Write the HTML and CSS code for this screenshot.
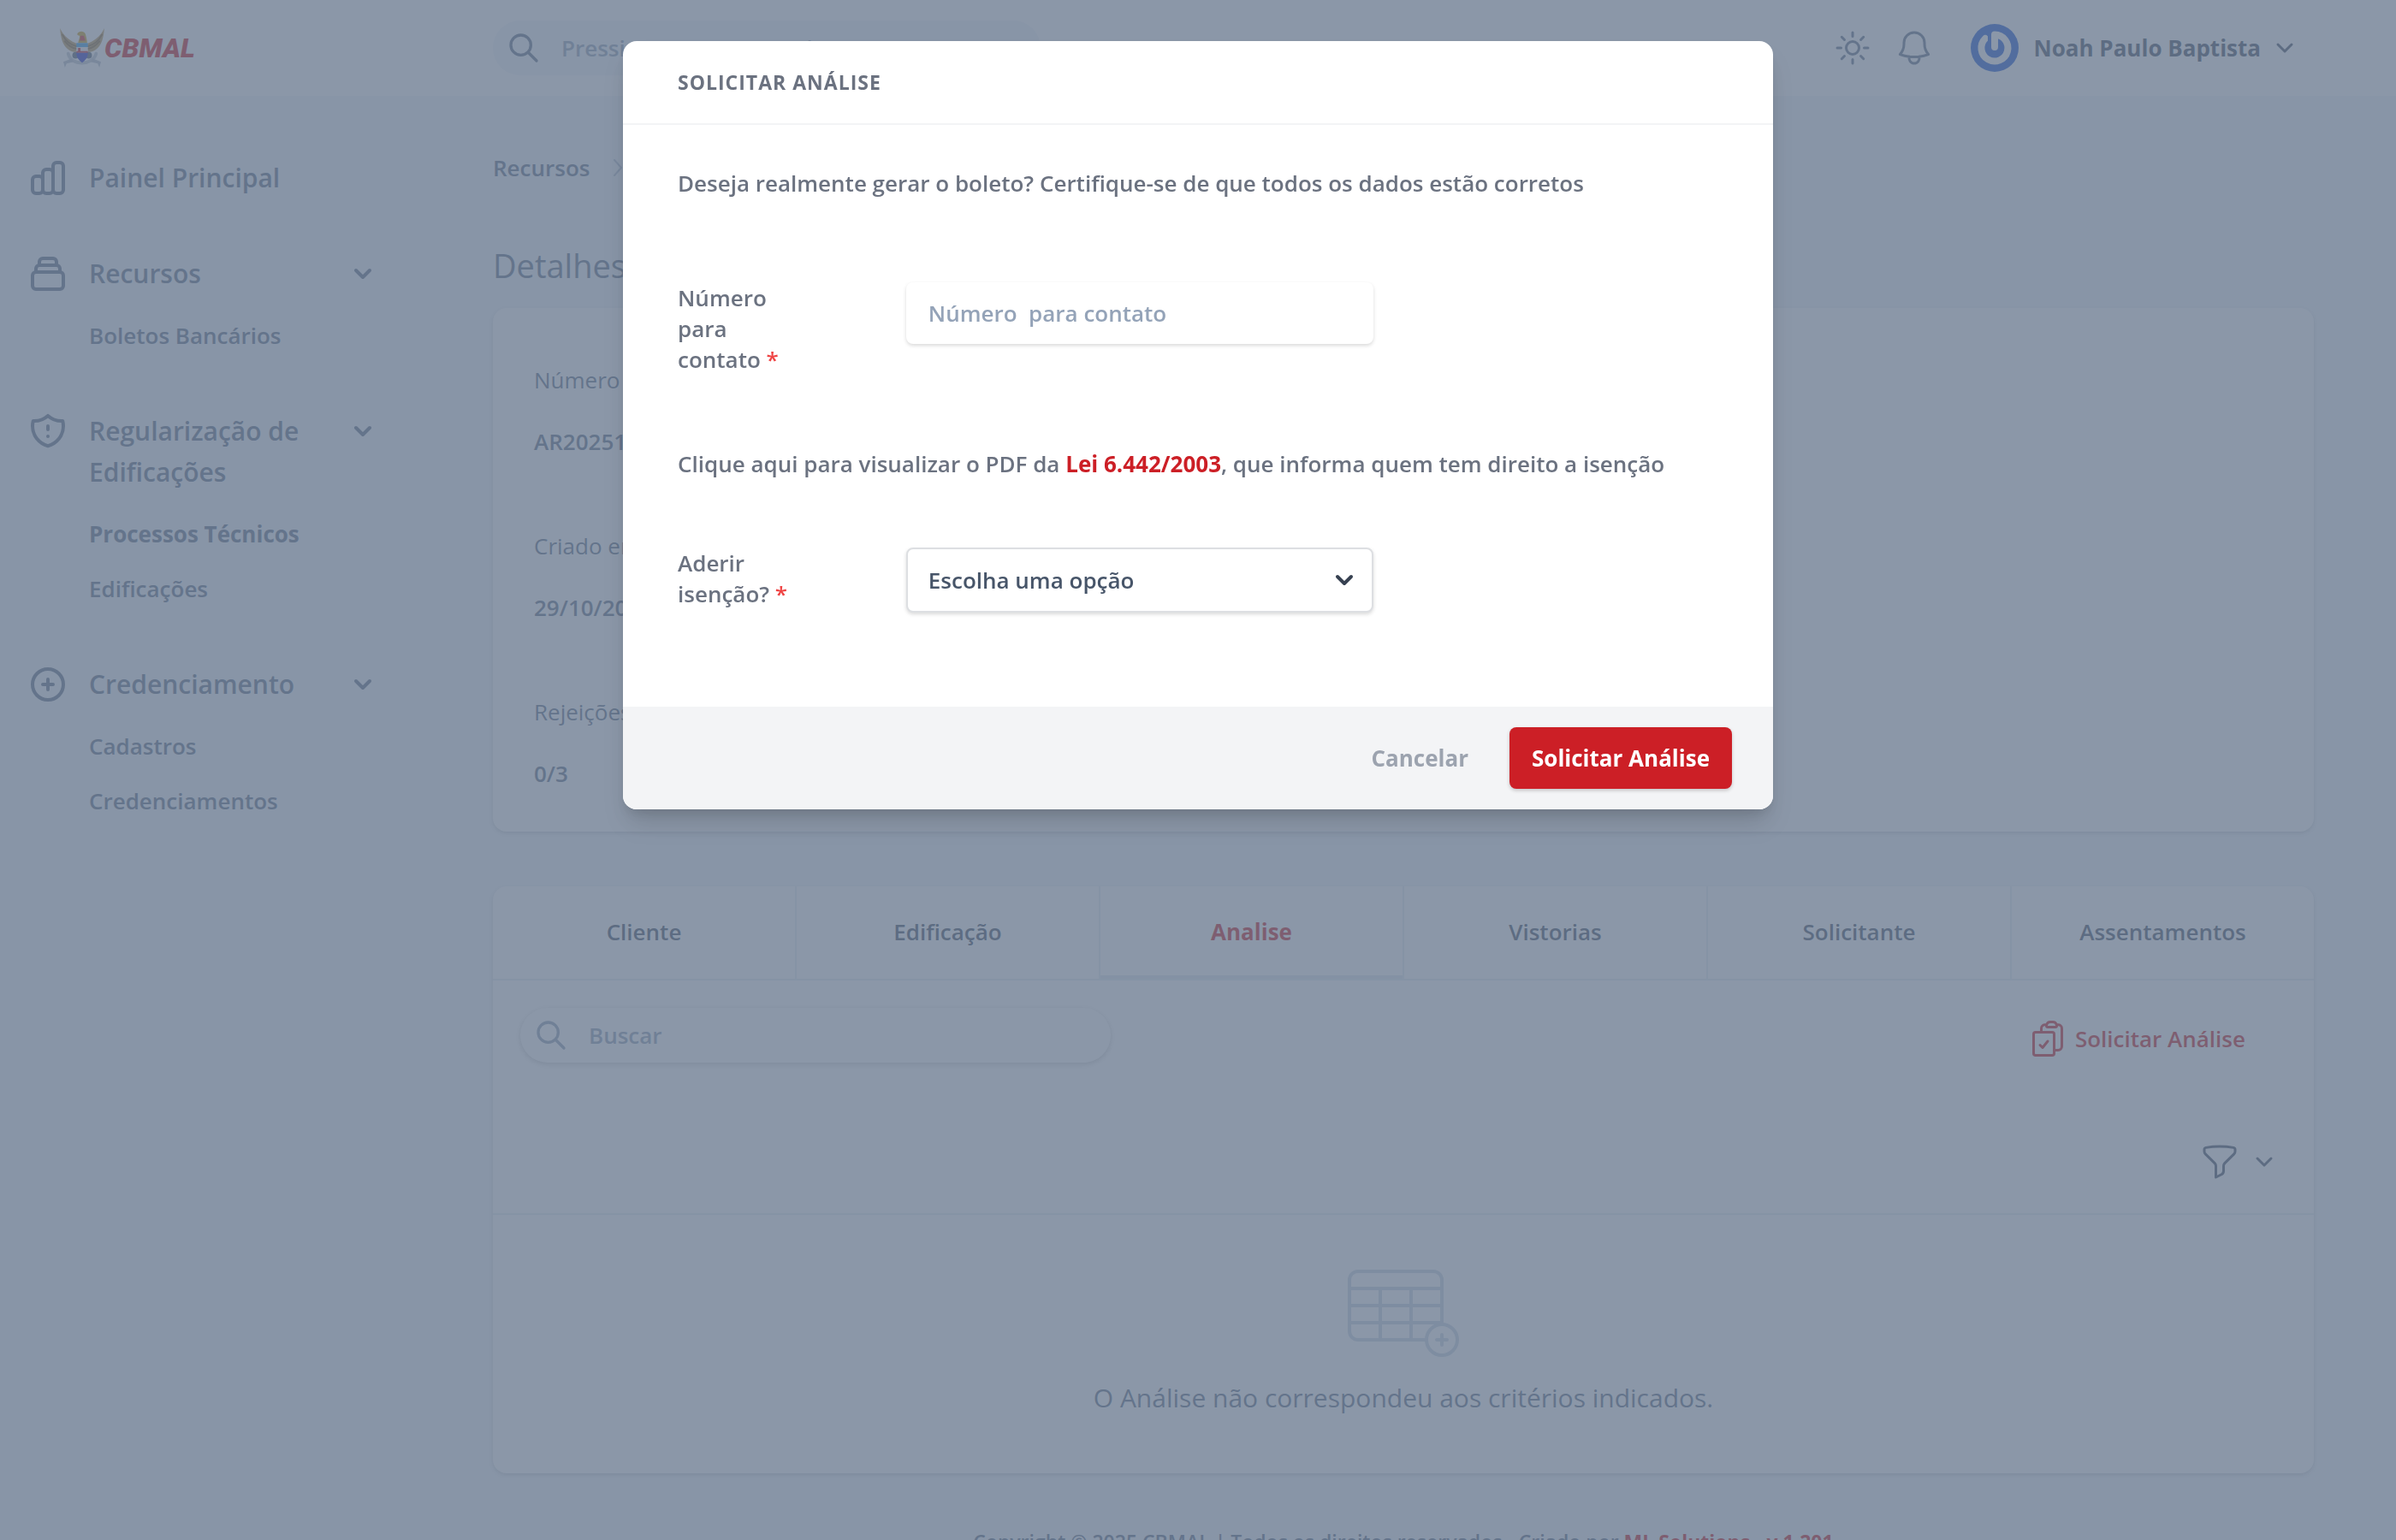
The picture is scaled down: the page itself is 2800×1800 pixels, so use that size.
FILE: index.html
```html
<!DOCTYPE html>
<html lang="pt-BR">
<head>
  <meta charset="UTF-8">
  <meta name="viewport" content="width=device-width, initial-scale=1.0">
  <title>CBMAL</title>
  <link rel="stylesheet" href="styles.css">
</head>

<body>
  <header class="topbar">
    <a class="brand" href="#">
      <svg class="brand-icon" viewBox="0 0 54 48" aria-hidden="true">
        <path fill="#bd9a5c" d="M0 0c1 12 3 20 9 25 3 3 7 4 11 4l1-10C14 16 5 11 0 0zM54 0c-1 12-3 20-9 25-3 3-7 4-11 4l-1-10C40 16 49 11 54 0z"/>
        <path stroke="#8a6b38" fill="none" d="M3 8c4 8 9 12 17 14M6 16c4 5 8 8 14 9M51 8c-4 8-9 12-17 14M48 16c-4 5-8 8-14 9"/>
        <path fill="#c9a227" d="M21 7c2-4 8-4 10 0 1 4 2 7 2 11H22c1-4 2-6 2-9-2 0-3-1-3-2z"/>
        <path fill="#d8302f" d="M25 9h4l2 6h-7z"/>
        <path fill="none" stroke="#c3c9d2" stroke-width="4" d="M10 31c3 15 30 15 34 0"/>
        <path fill="#b9c0cb" d="M4 41l10-4 3 4-9 2-2 5zM50 41l-10-4-3 4 9 2 2 5z"/>
        <circle cx="19" cy="33" r="4" fill="#56657a"/>
        <circle cx="35" cy="33" r="4" fill="#56657a"/>
        <path fill="#3aa0e8" d="M20 18h14v5H20z"/>
        <path fill="#f4f4f4" d="M20 23h14v6H20z"/>
        <path fill="#c6202a" d="M22 24h3v4h9v2H20v-2h2z"/>
        <path fill="#2836c8" d="M20 30h14c0 6-3 9-7 12-4-3-7-6-7-12z"/>
      </svg>
      <span>CBMAL</span>
    </a>
    <div class="topbar-search">
      <svg class="icon-search" viewBox="0 0 24 24" aria-hidden="true"><path d="M21 21l-6-6m2-5a7 7 0 11-14 0 7 7 0 0114 0z"/></svg>
      <input type="search" aria-label="Pesquisar" placeholder="Pressione / para pesquisar">
    </div>
    <div class="topbar-actions">
      <button class="icon-button" type="button" aria-label="Tema">
        <svg class="icon icon-thin" viewBox="0 0 24 24"><path d="M12 3v2.25m6.364.386l-1.591 1.591M21 12h-2.25m-.386 6.364l-1.591-1.591M12 18.75V21m-4.773-4.227l-1.591 1.591M5.25 12H3m4.227-4.773L5.636 5.636M15.75 12a3.75 3.75 0 11-7.5 0 3.75 3.75 0 017.5 0z"/></svg>
      </button>
      <button class="icon-button" type="button" aria-label="Notificações">
        <svg class="icon icon-thin" viewBox="0 0 24 24"><path d="M14.857 17.082a23.848 23.848 0 005.454-1.31A8.967 8.967 0 0118 9.75v-.7V9A6 6 0 006 9v.75a8.967 8.967 0 01-2.312 6.022c1.733.64 3.56 1.085 5.455 1.31m5.714 0a24.255 24.255 0 01-5.714 0m5.714 0a3 3 0 11-5.714 0"/></svg>
      </button>
      <button class="user-menu" type="button">
        <svg class="avatar" viewBox="0 0 56 56" aria-hidden="true">
          <circle cx="28" cy="28" r="28" fill="#1e5ad6"/>
          <path fill="none" stroke="#fff" stroke-width="8" stroke-linecap="round" d="M17 17a15.500 15.500 0 1 0 11-4.500V27"/>
          <path fill="none" stroke="#1e5ad6" stroke-width="4" d="M22 8v14"/>
        </svg>
        <span>Noah Paulo Baptista</span>
        <svg class="chevron chevron-thin" viewBox="0 0 10 6"><path d="M1 1l4 4 4-4"/></svg>
      </button>
    </div>
  </header>

  <div class="layout">
    <nav class="sidebar">
      <section class="menu-section menu-single">
        <a class="menu-title" href="#">
          <svg class="icon" viewBox="0 0 24 24"><path d="M9 19v-6a2 2 0 00-2-2H5a2 2 0 00-2 2v6a2 2 0 002 2h2a2 2 0 002-2zm0 0V9a2 2 0 012-2h2a2 2 0 012 2v10m-6 0a2 2 0 002 2h2a2 2 0 002-2m0 0V5a2 2 0 012-2h2a2 2 0 012 2v14a2 2 0 01-2 2h-2a2 2 0 01-2-2z"/></svg>
          <span>Painel Principal</span>
        </a>
      </section>
      <section class="menu-section">
        <button class="menu-title" type="button">
          <svg class="icon" viewBox="0 0 24 24"><path d="M19 11H5m14 0a2 2 0 012 2v6a2 2 0 01-2 2H5a2 2 0 01-2-2v-6a2 2 0 012-2m14 0V9a2 2 0 00-2-2M5 11V9a2 2 0 012-2m0 0V5a2 2 0 012-2h6a2 2 0 012 2v2M7 7h10"/></svg>
          <span>Recursos</span>
          <svg class="chevron" viewBox="0 0 10 6"><path d="M1 1l4 4 4-4"/></svg>
        </button>
        <a class="menu-item" href="#">Boletos Bancários</a>
      </section>
      <section class="menu-section">
        <button class="menu-title" type="button">
          <svg class="icon" viewBox="0 0 24 24"><path d="M20.618 5.984A11.955 11.955 0 0112 2.944a11.955 11.955 0 01-8.618 3.040A12.020 12.020 0 003 9c0 5.591 3.824 10.290 9 11.622 5.176-1.332 9-6.030 9-11.622 0-1.042-.133-2.052-.382-3.016zM12 9v2m0 4h.01"/></svg>
          <span>Regularização de Edificações</span>
          <svg class="chevron" viewBox="0 0 10 6"><path d="M1 1l4 4 4-4"/></svg>
        </button>
        <a class="menu-item active" href="#">Processos Técnicos</a>
        <a class="menu-item" href="#">Edificações</a>
      </section>
      <section class="menu-section">
        <button class="menu-title" type="button">
          <svg class="icon" viewBox="0 0 24 24"><path d="M12 9v3m0 0v3m0-3h3m-3 0H9m12 0a9 9 0 11-18 0 9 9 0 0118 0z"/></svg>
          <span>Credenciamento</span>
          <svg class="chevron" viewBox="0 0 10 6"><path d="M1 1l4 4 4-4"/></svg>
        </button>
        <a class="menu-item" href="#">Cadastros</a>
        <a class="menu-item" href="#">Credenciamentos</a>
      </section>
    </nav>

    <main class="content">
      <div class="breadcrumb">
        <a href="#">Recursos</a>
        <svg viewBox="0 0 10 20" aria-hidden="true"><path d="M1 1l8 9-8 9"/></svg>
      </div>
      <h1>Detalhes</h1>

      <dl class="card details">
        <div><dt>Número</dt><dd>AR20251</dd></div>
        <div><dt>Criado em</dt><dd>29/10/2025</dd></div>
        <div><dt>Rejeições</dt><dd>0/3</dd></div>
      </dl>

      <div class="card">
        <div class="tabs" role="tablist">
          <button type="button" role="tab">Cliente</button>
          <button type="button" role="tab">Edificação</button>
          <button type="button" role="tab" class="selected" aria-selected="true">Analise</button>
          <button type="button" role="tab">Vistorias</button>
          <button type="button" role="tab">Solicitante</button>
          <button type="button" role="tab">Assentamentos</button>
        </div>
        <div class="toolbar">
          <div class="table-search">
            <svg class="icon-search" viewBox="0 0 24 24" aria-hidden="true"><path d="M21 21l-6-6m2-5a7 7 0 11-14 0 7 7 0 0114 0z"/></svg>
            <input type="search" aria-label="Buscar" placeholder="Buscar">
          </div>
          <button class="request-button" type="button">
            <svg class="icon icon-thin" viewBox="0 0 24 24"><path d="M11.350 3.836c-.065.210-.100.433-.100.664 0 .414.336.750.750.750h4.500a.750.750 0 00.750-.750 2.250 2.250 0 00-.100-.664m-5.800 0A2.251 2.251 0 0113.500 2.250H15c1.012 0 1.867.668 2.150 1.586m-5.800 0c-.376.023-.750.050-1.124.080C9.095 4.010 8.250 4.973 8.250 6.108V8.250m8.900-4.414c.376.023.750.050 1.124.080 1.131.094 1.976 1.057 1.976 2.192V16.500A2.250 2.250 0 0118 18.750h-2.250m-7.500-10.500H4.875c-.621 0-1.125.504-1.125 1.125v11.250c0 .621.504 1.125 1.125 1.125h9.750c.621 0 1.125-.504 1.125-1.125V18.750m-7.500-10.500h6.375c.621 0 1.125.504 1.125 1.125v9.375m-8.250-3l1.500 1.500 3-3.750"/></svg>
            <span>Solicitar Análise</span>
          </button>
        </div>
        <div class="filters">
          <button class="filter-button" type="button" aria-label="Filtros">
            <svg class="icon icon-thin" viewBox="0 0 24 24"><path d="M12 3c2.755 0 5.455.232 8.083.678.533.090.917.556.917 1.096v1.044a2.250 2.250 0 01-.659 1.591l-5.432 5.432a2.250 2.250 0 00-.659 1.591v2.927a2.250 2.250 0 01-1.244 2.013L9.750 21v-6.568a2.250 2.250 0 00-.659-1.591L3.659 7.409A2.250 2.250 0 013 5.818V4.774c0-.540.384-1.006.917-1.096A48.320 48.320 0 0112 3z"/></svg>
            <svg class="chevron chevron-thin" viewBox="0 0 10 6"><path d="M1 1l4 4 4-4"/></svg>
          </button>
        </div>
        <div class="empty">
          <svg viewBox="0 0 65 51" aria-hidden="true">
            <rect x="1" y="1" width="54" height="40" rx="5"/>
            <path d="M1 11h54M1 21h54M1 31h54M19 11v30M37 11v30"/>
            <circle cx="55" cy="41" r="9"/>
            <path stroke-linecap="round" d="M52 41h6M55 38v6"/>
          </svg>
          <p>O Análise não correspondeu aos critérios indicados.</p>
        </div>
      </div>

      <footer class="footer">Copyright © 2025 CBMAL | Todos os direitos reservados - Criado por <a href="#">ML Solutions - v 1.201</a></footer>
    </main>
  </div>

  <div class="overlay">
    <form class="modal" role="dialog" aria-labelledby="modal-title">
      <h2 id="modal-title">Solicitar Análise</h2>
      <div class="modal-body">
        <p class="question">Deseja realmente gerar o boleto? Certifique-se de que todos os dados estão corretos</p>
        <div class="field">
          <label for="contato">Número para contato <span>*</span></label>
          <div class="control">
            <input id="contato" type="text" placeholder="Número  para contato">
          </div>
        </div>
        <p>Clique aqui para visualizar o PDF da <a href="#">Lei 6.442/2003</a>, que informa quem tem direito a isenção</p>
        <div class="field">
          <label for="isencao">Aderir isenção? <span>*</span></label>
          <div class="control">
            <select id="isencao">
              <option>Escolha uma opção</option>
              <option>Sim</option>
              <option>Não</option>
            </select>
            <svg class="chevron" viewBox="0 0 10 6"><path d="M1 1l4 4 4-4"/></svg>
          </div>
        </div>
      </div>
      <div class="modal-footer">
        <button class="cancel" type="button">Cancelar</button>
        <button class="submit" type="submit">Solicitar Análise</button>
      </div>
    </form>
  </div>
</body>

</html>
```
FILE: styles.css
```css
* {
  box-sizing: border-box;
}

body {
  margin: 0;
  height: 100vh;
  overflow: hidden;
  font-family: 'Open Sans', 'Noto Sans', sans-serif;
  font-size: 26px;
  font-weight: 600;
  line-height: 36px;
  color: #64748b;
  background-color: #f1f5f9;
}

h1, h2, p, dl, dd {
  margin: 0;
}

a {
  color: inherit;
  text-decoration: none;
}

button, input, select {
  font: inherit;
  color: inherit;
  border: 0;
  padding: 0;
  background: none;
}

svg {
  flex: none;
  fill: none;
  stroke: currentColor;
  stroke-width: 2;
  stroke-linecap: round;
  stroke-linejoin: round;
}

.icon {
  width: 48px;
  height: 48px;
}

.icon-thin {
  stroke-width: 1.5;
}

.icon-search {
  width: 40px;
  height: 40px;
}

.chevron {
  width: 20px;
  height: 12px;
  overflow: visible;
}

.chevron-thin {
  stroke-width: 1.5;
}

/* top bar */
.topbar {
  display: flex;
  align-items: center;
  height: 112px;
  padding: 0 120px 0 70px;
  background-color: #fff;
}

.brand {
  display: flex;
  align-items: center;
  width: 506px;
  font-family: Roboto, sans-serif;
  font-size: 32px;
  font-weight: 900;
  font-style: italic;
  color: #cc1f26;
}

.brand-icon {
  width: 52px;
  height: 46px;
  stroke: none;
}

.topbar-search {
  display: flex;
  align-items: center;
  gap: 24px;
  width: 640px;
  height: 64px;
  padding: 0 16px;
  border-radius: 32px;
  background-color: #f1f5f9;
}

.topbar-search input,
.table-search input {
  flex: 1;
  min-width: 0;
}

input::placeholder {
  color: #94a3b8;
  opacity: 1;
}

.topbar-actions {
  display: flex;
  align-items: center;
  gap: 24px;
  margin-left: auto;
}

.icon-button {
  display: flex;
}

.user-menu {
  display: flex;
  align-items: center;
  gap: 18px;
  margin-left: 18px;
  font-weight: 700;
  color: #475569;
}

.avatar {
  width: 56px;
  height: 56px;
  stroke: none;
}

/* sidebar */
.layout {
  display: flex;
}

.sidebar {
  width: 480px;
  padding: 72px 46px 0 32px;
}

.menu-section {
  margin-bottom: 56px;
}

.menu-single {
  margin-bottom: 64px;
}

.menu-title {
  display: flex;
  align-items: flex-start;
  gap: 24px;
  width: 100%;
  margin-bottom: 16px;
  font-size: 30px;
  line-height: 48px;
  text-align: left;
}

.menu-title span {
  flex: 1;
}

.menu-title .chevron {
  margin-top: 18px;
}

.menu-item {
  display: block;
  padding-left: 72px;
  line-height: 64px;
}

.menu-item.active {
  font-weight: 700;
}

/* content */
.content {
  flex: 1;
  padding: 64px 96px 0;
}

.breadcrumb {
  display: flex;
  align-items: center;
  gap: 28px;
  height: 40px;
}

.breadcrumb svg {
  width: 10px;
  height: 20px;
  color: #b6c2d1;
}

h1 {
  margin: 70px 0 26px;
  font-size: 38px;
  font-weight: 400;
  line-height: 48px;
}

.card {
  border-radius: 16px;
  background-color: #fff;
  box-shadow: 0 2px 4px rgba(0, 0, 0, 0.15);
}

.details {
  display: flex;
  flex-direction: column;
  gap: 50px;
  padding: 48px 48px 32px;
  margin-bottom: 64px;
}

.details dt,
.details dd {
  line-height: 72px;
}

.details dt {
  font-weight: 400;
}

.tabs {
  display: flex;
  border-bottom: 2px solid #e8edf2;
}

.tabs button {
  flex: 1;
  height: 108px;
  padding-bottom: 2px;
  color: #475569;
}

.tabs button + button {
  border-left: 2px solid #e8edf2;
}

.tabs .selected {
  box-shadow: inset 0 -4px #e2e8f0;
  font-weight: 700;
  color: #cc1f26;
}

.toolbar {
  display: flex;
  align-items: flex-start;
  justify-content: space-between;
  padding: 32px 80px 32px 32px;
}

.table-search {
  display: flex;
  align-items: center;
  gap: 24px;
  width: 690px;
  height: 64px;
  padding: 0 16px;
  border-radius: 32px;
  box-shadow: 0 2px 6px rgba(0, 0, 0, 0.2);
  color: #94a3b8;
}

.request-button {
  display: flex;
  align-items: center;
  gap: 8px;
  height: 72px;
  color: #cc1f26;
}

.filters {
  display: flex;
  justify-content: flex-end;
  padding: 52px 48px 36px;
  border-bottom: 2px solid #e8edf2;
}

.filter-button {
  display: flex;
  align-items: center;
  gap: 18px;
  color: #475569;
}

.empty {
  padding: 64px 0;
  text-align: center;
}

.empty p {
  margin-top: 16px;
  font-size: 30px;
  font-weight: 400;
  line-height: 48px;
}

.empty svg {
  width: 130px;
  height: 102px;
  color: #cbd5e1;
  overflow: visible;
}

.empty circle {
  fill: #fff;
}

.footer {
  margin-top: 62px;
  font-size: 23px;
  text-align: center;
}

.footer a {
  font-weight: 700;
  color: #cc1f26;
}

/* modal */
.overlay {
  position: fixed;
  inset: 0;
  padding: 48px;
  background-color: rgba(100, 116, 139, 0.75);
}

.modal {
  max-width: 1344px;
  margin: 0 auto;
  border-radius: 16px;
  overflow: hidden;
  color: #6b7280;
  background-color: #fff;
  box-shadow: 0 20px 30px -6px rgba(0, 0, 0, 0.15), 0 8px 12px -4px rgba(0, 0, 0, 0.1);
}

.modal h2 {
  padding: 32px 64px;
  border-bottom: 2px solid #f3f4f6;
  font-size: 23px;
  font-weight: 700;
  line-height: 32px;
  letter-spacing: 1px;
  text-transform: uppercase;
}

.modal-body {
  padding: 50px 0 24px;
}

.modal-body p {
  padding: 0 64px;
}

.modal-body .question {
  padding-bottom: 18px;
}

.modal-body p a {
  font-weight: 700;
  color: #cc1f26;
}

.field {
  display: flex;
  padding: 80px 0 86px;
}

.field label {
  width: 20%;
  padding: 0 64px;
}

.field label span {
  color: #ef4444;
}

.control {
  position: relative;
  width: 50%;
  padding: 0 64px 0 62px;
}

.control input,
.control select {
  width: 100%;
  height: 72px;
  padding: 0 26px;
  border-radius: 8px;
  background-color: #fff;
  box-shadow: 0 2px 4px rgba(0, 0, 0, 0.15);
}

.control select {
  appearance: none;
  height: 76px;
  padding: 0 24px;
  border: 2px solid #dddfe2;
  color: #475569;
}

.control .chevron {
  position: absolute;
  top: 32px;
  right: 88px;
  color: #374151;
}

.modal-footer {
  display: flex;
  justify-content: flex-end;
  gap: 48px;
  padding: 24px 48px;
  background-color: #f3f4f6;
}

.modal-footer button {
  height: 72px;
  font-weight: 700;
}

.cancel {
  color: #9ca3af;
}

.submit {
  padding: 0 26px;
  border-radius: 8px;
  color: #fff;
  background-color: #cc1f26;
  box-shadow: 0 2px 4px rgba(0, 0, 0, 0.2);
}
```
